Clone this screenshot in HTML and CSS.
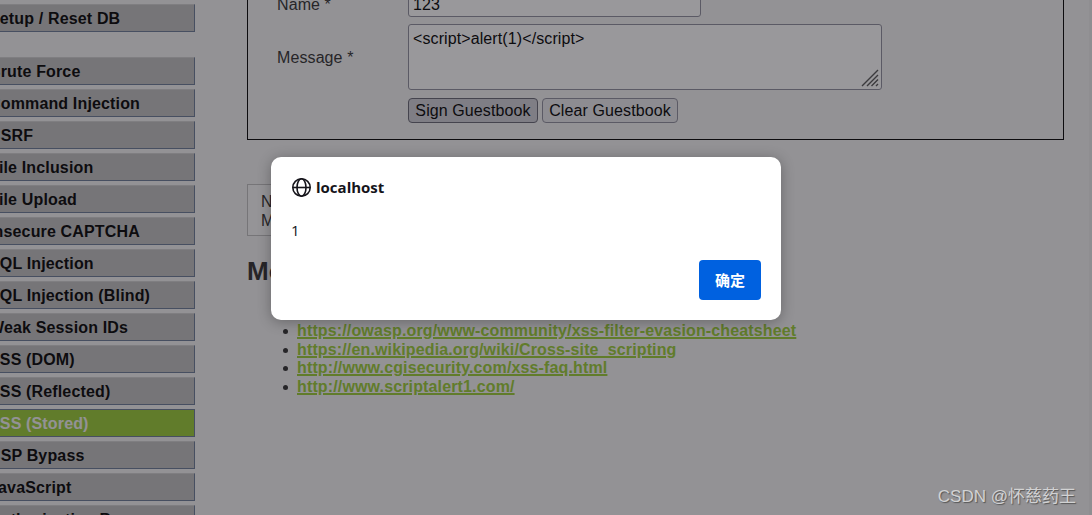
FILE: index.html
```html
<!DOCTYPE html>
<html lang="zh-CN">
<head>
  <meta charset="UTF-8">
  <meta name="viewport" content="width=device-width, initial-scale=1.0">
  <title>Stored Cross Site Scripting (XSS)</title>
  <link rel="stylesheet" href="styles.css">
</head>
<body>
  <div class="page">
    <div class="menu">
      <ul>
        <li>Setup / Reset DB</li>
      </ul>
      <ul>
        <li>Brute Force</li>
        <li>Command Injection</li>
        <li>CSRF</li>
        <li>File Inclusion</li>
        <li>File Upload</li>
        <li>Insecure CAPTCHA</li>
        <li>SQL Injection</li>
        <li>SQL Injection (Blind)</li>
        <li>Weak Session IDs</li>
        <li>XSS (DOM)</li>
        <li>XSS (Reflected)</li>
        <li class="selected">XSS (Stored)</li>
        <li>CSP Bypass</li>
        <li>JavaScript</li>
        <li>Authorisation Bypass</li>
      </ul>
    </div>

    <div class="content">
      <form class="guestbook">
        <label for="name" class="name-label">Name *</label>
        <input type="text" id="name" class="name" value="123">
        <label for="message" class="message-label">Message *</label>
        <div class="message-wrap">
          <textarea id="message" class="message">&lt;script&gt;alert(1)&lt;/script&gt;</textarea>
          <svg class="grip" width="18" height="18" viewBox="0 0 18 18">
            <path d="M1 17L17 1M6 17L17 6M10.500 17L17 10.500M15 17L17 15" fill="none" stroke="#555" stroke-width="1.400"/>
          </svg>
        </div>
        <div class="buttons">
          <button type="button" class="pressed">Sign Guestbook</button>
          <button type="button">Clear Guestbook</button>
        </div>
      </form>

      <div class="comment">N<br>M</div>

      <h2>More Information</h2>
      <ul class="links">
        <li><a href="#">https://owasp.org/www-community/xss-filter-evasion-cheatsheet</a></li>
        <li><a href="#">https://en.wikipedia.org/wiki/Cross-site_scripting</a></li>
        <li><a href="#">http://www.cgisecurity.com/xss-faq.html</a></li>
        <li><a href="#">http://www.scriptalert1.com/</a></li>
      </ul>
    </div>
    <div class="edge"></div>
  </div>

  <div class="overlay">
    <div class="dialog">
      <div class="dialog-title">
        <svg width="20" height="20" viewBox="0 0 20 20" fill="none" stroke="#15141a" stroke-width="1.600">
          <circle cx="10.500" cy="10.500" r="8.700"/>
          <ellipse cx="10.500" cy="10.500" rx="4.500" ry="8.700"/>
          <path d="M2 10.500h17"/>
        </svg>
        <span>localhost</span>
      </div>
      <p>1</p>
      <button type="button" class="ok">确定</button>
    </div>
  </div>
  <div class="watermark">CSDN @怀慈药王</div>
</body>
</html>
```

FILE: styles.css
```css
* {
  box-sizing: border-box;
}
body {
  margin: 0;
  height: 515px;
  overflow: hidden;
  position: relative;
  background: #f4f4f4;
  color: #2f2f2f;
  font-family: "Liberation Sans", Arial, sans-serif;
  font-size: 16px;
}
.page {
  display: flex;
  height: 515px;
  overflow: hidden;
}

/* left menu */
.menu {
  flex: none;
  width: 215px;
  margin-left: -20px;
  padding-top: 4px;
}
.menu ul {
  list-style: none;
  margin: 0 0 25px;
  padding: 0;
}
.menu li {
  height: 28px;
  padding-left: 8px;
  border: 1px solid #6a7a96;
  border-top-color: #cfcfcf;
  background: #c0c0c0;
  color: #000;
  font-weight: bold;
  letter-spacing: 0.15px;
  line-height: 27px;
  white-space: nowrap;
}
.menu li + li {
  margin-top: 4px;
}
.menu li.selected {
  background: #99cc33;
  border-top-color: #6a7a96;
  color: #f4f4f4;
}

/* main column */
.content {
  flex: 1;
  padding: 0 25px 0 52px;
}
.guestbook {
  display: grid;
  grid-template-columns: 131px 1fr;
  grid-template-rows: 17px 66px 25px;
  row-gap: 7px;
  column-gap: 0;
  align-items: center;
  align-content: start;
  height: 140px;
  padding-left: 29px;
  border: 1px solid #000;
  border-top: none;
  letter-spacing: 0.1px;
}
.name-label {
  align-self: end;
  line-height: 25px;
}
.message-label {
  padding-top: 2px;
}
.name,
.message,
.guestbook button {
  font: inherit;
  letter-spacing: inherit;
  color: #000;
  border: 1px solid #8f8f9d;
}
.name {
  align-self: end;
  width: 293px;
  height: 25px;
  padding: 0 4px;
  border-radius: 3px;
  background: #fff;
}
.message-wrap {
  position: relative;
  width: 474px;
  height: 66px;
}
.message {
  display: block;
  width: 474px;
  height: 66px;
  padding: 5px 4px;
  border-radius: 3px;
  background: #fff;
  resize: none;
}
.grip {
  position: absolute;
  right: 3px;
  bottom: 3px;
}
.buttons {
  grid-column: 2;
  display: flex;
  gap: 4px;
  margin-top: 2px;
}
.guestbook button {
  height: 25px;
  padding: 0;
  width: 136px;
  border-radius: 4px;
  background: #e9e9ed;
}
.guestbook .pressed {
  width: 130px;
  border-color: #676774;
  background: #d0d0d7;
}
.comment {
  width: 400px;
  height: 52px;
  margin-top: 44px;
  padding: 7px 13px;
  border: 1px solid #c0c0c0;
  background: #f8f8f8;
  line-height: 19px;
}
h2 {
  margin: 20px 0 0;
  font-size: 26px;
  line-height: 30px;
}
.links {
  margin: 36px 0 0;
  padding-left: 52px;
  line-height: 18.600px;
}
.links a {
  margin-left: -2px;
  color: #99cc33;
  font-weight: bold;
  letter-spacing: 0.14px;
  text-decoration-thickness: 2px;
}
.edge {
  flex: none;
  width: 3px;
  background: #ededed;
}

/* alert dialog */
.overlay {
  position: absolute;
  inset: 0;
  background: rgba(28, 27, 34, 0.45);
}
.dialog {
  position: absolute;
  left: 271px;
  top: 157px;
  display: flex;
  flex-direction: column;
  width: 510px;
  height: 163px;
  padding: 20px;
  border-radius: 10px;
  background: #fff;
  box-shadow: 0 2px 14px rgba(0, 0, 0, 0.3);
  color: #15141a;
  font-family: "Open Sans", "Noto Sans CJK SC", sans-serif;
  font-size: 15px;
}
.dialog-title {
  display: flex;
  align-items: center;
  gap: 5px;
  height: 20px;
  font-weight: bold;
}
.dialog p {
  margin: 22px 0 0;
  line-height: 22px;
}
.ok {
  align-self: flex-end;
  margin-top: auto;
  width: 62px;
  height: 40px;
  padding: 0 0 2px;
  border: none;
  border-radius: 4px;
  background: #0061e0;
  color: #fff;
  font-family: "Noto Sans CJK SC", sans-serif;
  font-size: 15px;
  font-weight: bold;
}
.watermark {
  position: absolute;
  right: 16px;
  bottom: 6px;
  color: #d2d2d3;
  font-family: "Liberation Sans", "Noto Sans CJK SC", sans-serif;
  font-size: 17px;
  line-height: 24px;
  text-shadow: 1px 1px 1px #555;
}
```
